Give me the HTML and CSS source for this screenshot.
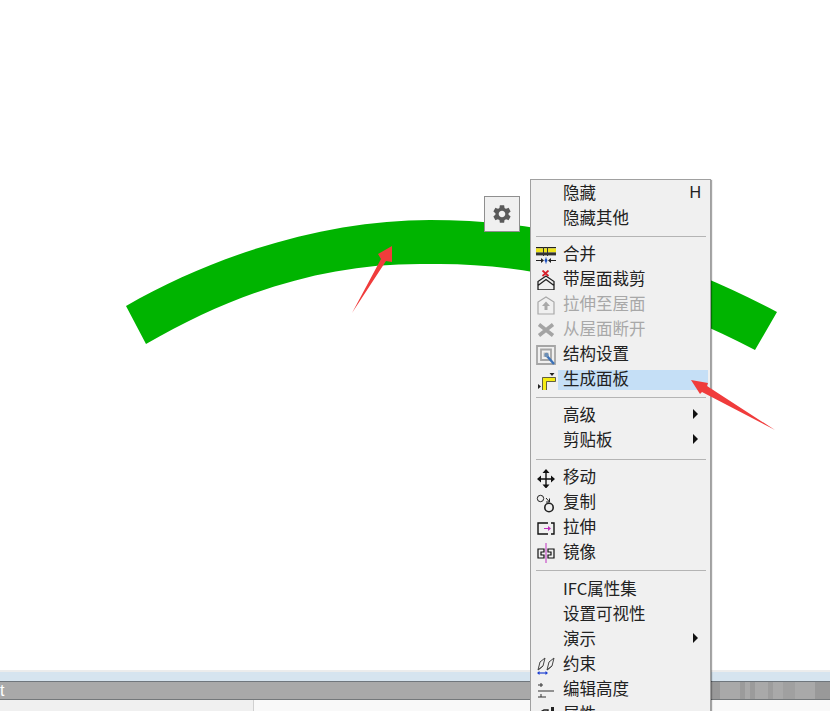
FILE: index.html
```html
<!DOCTYPE html>
<html lang="zh-CN">
<head>
    <meta charset="UTF-8">
    <meta name="viewport" content="width=device-width, initial-scale=1.0">
    <title>Roof Panel Menu</title>
    <link rel="stylesheet" href="styles.css">
</head>
<body>
    <div class="canvas">
        <svg class="drawing" viewBox="0 0 830 670">
            <path class="band" d="M126 306 C220 252 330 220 430 220 C530 220 640 240 777 312 L755 350 C640 290 530 262 430 264 C330 262 240 290 146 344 Z"/>
            <polygon class="arrow" points="352,313 381,259 378,254 392,246 392,262 386,261"/>
        </svg>

        <div class="gear-button">
            <svg class="gear" viewBox="0 0 24 24"><path d="M19.14 12.94c.04-.3.06-.61.06-.94 0-.32-.02-.64-.07-.94l2.03-1.58c.18-.14.23-.41.12-.61l-1.92-3.32c-.12-.22-.37-.29-.59-.22l-2.39.96c-.5-.38-1.03-.7-1.62-.94l-.36-2.54c-.04-.24-.24-.41-.48-.41h-3.84c-.24 0-.43.17-.47.41l-.36 2.54c-.59.24-1.13.57-1.62.94l-2.39-.96c-.22-.08-.47 0-.59.22L2.74 8.87c-.12.21-.08.47.12.61l2.03 1.58c-.05.3-.09.63-.09.94s.02.64.07.94l-2.03 1.58c-.18.14-.23.41-.12.61l1.92 3.32c.12.22.37.29.59.22l2.39-.96c.5.38 1.03.7 1.62.94l.36 2.54c.05.24.24.41.48.41h3.84c.24 0 .44-.17.47-.41l.36-2.54c.59-.24 1.13-.56 1.62-.94l2.39.96c.22.08.47 0 .59-.22l1.92-3.32c.12-.22.07-.47-.12-.61l-2.01-1.58zM12 15.6c-1.98 0-3.6-1.62-3.6-3.6s1.62-3.6 3.6-3.6 3.6 1.62 3.6 3.6-1.62 3.6-3.6 3.6z"/></svg>
        </div>

        <div class="menu">
            <div class="menu-item"><span class="icon"></span><span class="label">隐藏<span class="shortcut">H</span></span></div>
            <div class="menu-item"><span class="icon"></span><span class="label">隐藏其他</span></div>
            <div class="menu-sep"></div>

            <div class="menu-item">
                <svg class="icon" viewBox="0 0 20 20">
                    <rect x="0" y="2" width="20" height="1.4" fill="#222"/>
                    <rect x="0" y="3.4" width="20" height="4" fill="#eee51a"/>
                    <rect x="0" y="7.4" width="20" height="3" fill="#333"/>
                    <path d="M7.5 2V11M11.5 2V11" stroke="#333" fill="none"/>
                    <path d="M0 15.5H6M14 15.5H20" stroke="#222" fill="none"/>
                    <path d="M5 13L8 15.5L5 18ZM15 13L12 15.5L15 18Z" fill="#222"/>
                    <path d="M10 12.5V18.5" stroke="#1a4fc0" fill="none"/>
                    <circle cx="10" cy="15.5" r="1.4" fill="#1a4fc0"/>
                </svg>
                <span class="label">合并</span>
            </div>
            <div class="menu-item">
                <svg class="icon" viewBox="0 0 20 20">
                    <path d="M2 20V11.5L10 6L18 11.5V20ZM2 15.5L10 9.5L18 15.5" stroke="#222" stroke-width="1.3" fill="none"/>
                    <path d="M6.5 0.5L12.5 6M12.5 0.5L6.5 6" stroke="#d8202a" stroke-width="1.7" fill="none"/>
                </svg>
                <span class="label">带屋面裁剪</span>
            </div>
            <div class="menu-item disabled">
                <svg class="icon" viewBox="0 0 20 20">
                    <path d="M2 19V7L10 2L18 7V19Z" stroke="#a8a8a8" stroke-width="1.2" fill="none"/>
                    <path d="M10 6.5L14 11H11.5V15H8.5V11H6Z" fill="#a8a8a8"/>
                </svg>
                <span class="label">拉伸至屋面</span>
            </div>
            <div class="menu-item disabled">
                <svg class="icon" viewBox="0 0 20 20">
                    <path d="M3 4.5L17 15.5M17 4.5L3 15.5" stroke="#a4a4a4" stroke-width="3.6" fill="none"/>
                </svg>
                <span class="label">从屋面断开</span>
            </div>
            <div class="menu-item">
                <svg class="icon" viewBox="0 0 20 20">
                    <path d="M1 1H19V19H1ZM5 4.5H15V15H5Z" stroke="#a6a6a6" stroke-width="1.8" fill="none"/>
                    <path d="M7.5 7.5H12.5V12H7.5Z" fill="#bdbdbd"/>
                    <path d="M11 11L18 19" stroke="#3b72b8" stroke-width="2.4" fill="none"/>
                    <circle cx="10.5" cy="10" r="2.2" fill="#6d8fb5"/>
                </svg>
                <span class="label">结构设置</span>
            </div>
            <div class="menu-item">
                <svg class="icon" viewBox="0 0 20 20">
                    <path d="M13.5 3H18.5L16 6Z" fill="#222"/>
                    <path d="M6.5 7.5H19.5V11.5H10.5V20.5H6.5Z" fill="#f5ec14" stroke="#222" stroke-width=".7"/>
                    <path d="M2 14L5 16.5L2 19Z" fill="#222"/>
                </svg>
                <span class="label active">生成面板</span>
            </div>
            <div class="menu-sep"></div>

            <div class="menu-item"><span class="icon"></span><span class="label">高级<span class="submenu"></span></span></div>
            <div class="menu-item"><span class="icon"></span><span class="label">剪贴板<span class="submenu"></span></span></div>
            <div class="menu-sep wide-top"></div>

            <div class="menu-item">
                <svg class="icon" viewBox="0 0 20 20">
                    <path d="M2 11H18M10 3V19" stroke="#111" stroke-width="1.4" fill="none"/>
                    <path d="M10 1L13.5 5H6.5ZM10 20.5L6.5 16.5H13.5ZM1 11L5 7.5V14.5ZM19 11L15 7.5V14.5Z" fill="#111"/>
                </svg>
                <span class="label">移动</span>
            </div>
            <div class="menu-item">
                <svg class="icon" viewBox="0 0 20 20">
                    <circle cx="4.5" cy="5.5" r="3.2" stroke="#222" fill="none"/>
                    <circle cx="13" cy="14.5" r="4.2" stroke="#222" stroke-width="1.6" fill="none"/>
                    <path d="M10 5L13.5 9M13.5 5.5V9H10" stroke="#222" fill="none"/>
                </svg>
                <span class="label">复制</span>
            </div>
            <div class="menu-item">
                <svg class="icon" viewBox="0 0 20 20">
                    <path d="M12 5H2V16H12M15 5H18V16H15" stroke="#111" stroke-width="1.4" fill="none"/>
                    <path d="M8 10.5H14" stroke="#c030c0" fill="none"/>
                    <path d="M12 8V13L15 10.5Z" fill="#c030c0"/>
                </svg>
                <span class="label">拉伸</span>
            </div>
            <div class="menu-item">
                <svg class="icon" viewBox="0 0 20 20">
                    <path d="M8 6H2V15H8V12H5V9H8ZM12 6H18V15H12V12H15V9H12Z" stroke="#111" stroke-width="1.2" fill="none"/>
                    <path d="M10 0V20" stroke="#c030c0" fill="none"/>
                </svg>
                <span class="label">镜像</span>
            </div>
            <div class="menu-sep wide-bottom"></div>

            <div class="menu-item"><span class="icon"></span><span class="label">IFC属性集</span></div>
            <div class="menu-item"><span class="icon"></span><span class="label">设置可视性</span></div>
            <div class="menu-item"><span class="icon"></span><span class="label">演示<span class="submenu"></span></span></div>
            <div class="menu-item">
                <svg class="icon" viewBox="0 0 20 20">
                    <path d="M2 15L4 7L9 3L7 11ZM11 15L13 7L18 3L16 11ZM2 15L7 11M11 15L16 11" stroke="#444" fill="none"/>
                    <path d="M2 18H11" stroke="#1c3fd0" stroke-width="1.2" fill="none"/>
                    <path d="M1 18L3.5 16V20ZM12 18L9.5 16V20Z" fill="#1c3fd0"/>
                </svg>
                <span class="label">约束</span>
            </div>
            <div class="menu-item">
                <svg class="icon" viewBox="0 0 20 20">
                    <path d="M2 5H7M2 11H18M2 17H10M5 3V7M5 14V17" stroke="#333" fill="none"/>
                </svg>
                <span class="label">编辑高度</span>
            </div>
            <div class="menu-item">
                <svg class="icon" viewBox="0 0 20 20">
                    <path d="M1 9L8 5H12V14H4Z" stroke="#222" stroke-width="1.4" fill="none"/>
                    <path d="M15 2H18V18H15Z" fill="#222"/>
                </svg>
                <span class="label">属性</span>
            </div>
        </div>

        <svg class="drawing over" viewBox="0 0 830 670">
            <polygon class="arrow" points="691,380 708,383 707,386 775,430 702,392 700,394"/>
        </svg>
    </div>

    <div class="bottom-panel">
        <div class="tab-strip"></div>
        <div class="title-bar">t</div>
        <div class="panel-body">
            <div class="panel-left"></div>
            <div class="panel-right"></div>
        </div>
    </div>
</body>
</html>
```

FILE: styles.css
```css
html, body {
    margin: 0;
    height: 711px;
    overflow: hidden;
    background-color: #fff;
}

body {
    display: flex;
    flex-direction: column;
    font-family: "Noto Sans CJK SC", "Noto Sans", sans-serif;
}

.canvas {
    position: relative;
    height: 670px;
    flex: none;
}

.drawing {
    position: absolute;
    left: 0;
    top: 0;
    width: 830px;
    height: 670px;
}

.drawing.over {
    z-index: 3;
    pointer-events: none;
}

.band {
    fill: #00b400;
}

.arrow {
    fill: #f03c3c;
}

.gear-button {
    position: absolute;
    left: 484px;
    top: 196px;
    width: 36px;
    height: 36px;
    box-sizing: border-box;
    border: 1px solid #8f8f8f;
    background-color: #f0f0f0;
    display: flex;
    align-items: center;
    justify-content: center;
}

.gear {
    width: 22px;
    height: 22px;
    fill: #5a5a5a;
}

.menu {
    position: absolute;
    z-index: 2;
    left: 530px;
    top: 179px;
    width: 181px;
    height: 560px;
    box-sizing: border-box;
    padding-top: 1px;
    border: 1px solid #a0a0a0;
    background-color: #f0f0f0;
    box-shadow: 1px 1px 1px rgba(0, 0, 0, 0.35);
    font-size: 16.5px;
    color: #222;
}

.menu-item {
    display: flex;
    align-items: center;
    height: 25px;
    padding: 0 2px 0 5px;
}

.menu-item.disabled {
    color: #a8a8a8;
}

.icon {
    width: 20px;
    height: 20px;
    flex: none;
    margin-right: 2px;
}

.label {
    flex: 1;
    box-sizing: border-box;
    display: flex;
    align-items: center;
    justify-content: space-between;
    height: 20px;
    line-height: 17px;
    padding: 0 7px 3px 5px;
}

.label.active {
    background-color: #c5dff6;
}

.shortcut {
    font-family: "Liberation Sans", sans-serif;
    font-size: 16px;
}

.submenu {
    width: 0;
    height: 0;
    margin-right: 3px;
    border-left: 5px solid #111;
    border-top: 5px solid transparent;
    border-bottom: 5px solid transparent;
}

.menu-sep {
    height: 1px;
    margin: 5px 4px 5px 5px;
    background-color: #b4b4b4;
}

.menu-sep.wide-top {
    margin-top: 6px;
}

.menu-sep.wide-bottom {
    margin-bottom: 6px;
}

.bottom-panel {
    flex: 1;
    display: flex;
    flex-direction: column;
    border-top: 2px solid #ececec;
}

.tab-strip {
    height: 9px;
    background-color: #d6e4ef;
}

.title-bar {
    height: 17px;
    border-top: 1px solid #6f767c;
    border-bottom: 1px solid #74787a;
    background: linear-gradient(to right,
        #a9a9a9 0, #a9a9a9 712px,
        #999 712px, #999 720px,
        #a9a9a9 720px, #a9a9a9 740px,
        #9b9b9b 740px, #9b9b9b 745px,
        #a9a9a9 745px, #a9a9a9 750px,
        #9b9b9b 750px, #9b9b9b 755px,
        #a9a9a9 755px, #a9a9a9 768px,
        #9d9d9d 768px, #9d9d9d 773px,
        #a9a9a9 773px, #a9a9a9 783px,
        #a0a0a0 783px, #a0a0a0 795px,
        #a9a9a9 795px, #a9a9a9 815px,
        #999 815px, #999 830px);
    color: #fff;
    font-family: "Liberation Sans", sans-serif;
    font-size: 16px;
    line-height: 17px;
}

.panel-body {
    flex: 1;
    display: flex;
}

.panel-left {
    width: 253px;
    border-right: 1px solid #d0d0d0;
    background-color: #f0f0f0;
}

.panel-right {
    flex: 1;
    background-color: #f9f9f9;
}
```
